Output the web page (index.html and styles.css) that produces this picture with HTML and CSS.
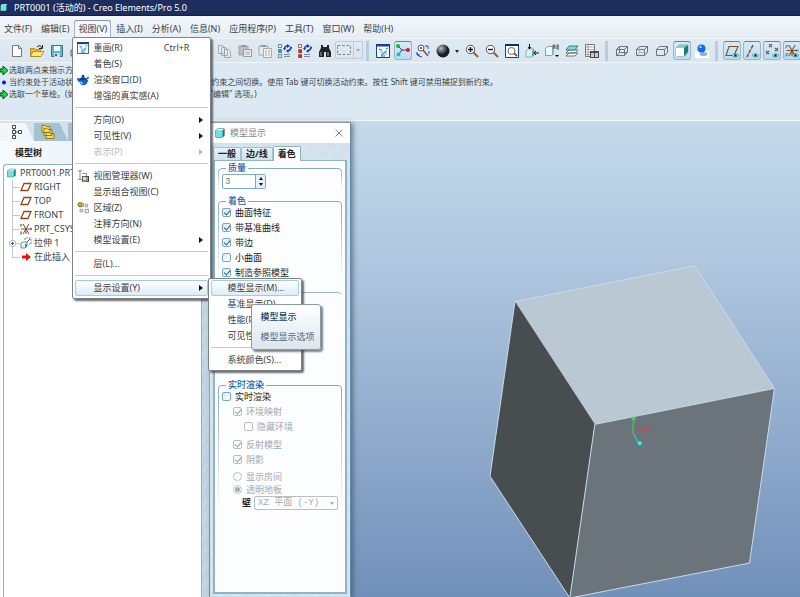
FILE: index.html
```html
<!DOCTYPE html>
<html lang="zh-CN">
<head>
    <meta charset="UTF-8">
    <meta name="viewport" content="width=device-width, initial-scale=1.0">
    <title>PRT0001 (活动的) - Creo Elements/Pro 5.0</title>
    <link rel="stylesheet" href="styles.css">
</head>
<body>
    <!-- Shared icons -->
    <svg class="defs" aria-hidden="true">
        <symbol id="part" viewBox="0 0 12 12">
            <path d="M1 3l2-2h8v8l-2 2H1z" fill="#1b8a8a" stroke="#234" stroke-width=".8"/>
            <path d="M1 3h8v8H1z" fill="#6fe3e0"/>
            <path d="M1 3l2-2h8L9 3z" fill="#d8ffff"/>
        </symbol>
        <symbol id="plane" viewBox="0 0 12 12">
            <path d="M4 2.500h7L8 9.500H1z" fill="none" stroke="#8a4a22" stroke-width="1.300"/>
        </symbol>
        <symbol id="csys" viewBox="0 0 12 12">
            <path d="M1 6h10M3 1l6 10M9 1L3 11M6 6v5" fill="none" stroke="#8a4a22" stroke-width="1"/>
            <path d="M0 1l2 2M2 1L0 4M10 5l2 2M12 5l-2 2M0 9h2l-2 2h2" fill="none" stroke="#555" stroke-width=".7"/>
        </symbol>
        <symbol id="eye" viewBox="0 0 8 5">
            <path d="M0 2.500Q4-1.500 8 2.500Q4 6 0 2.500z" fill="#d5e2e4" stroke="#566" stroke-width=".7"/>
            <circle cx="4" cy="2.400" r="1.700" fill="#087f80"/>
            <circle cx="4" cy="2.400" r=".7" fill="#012"/>
        </symbol>
        <symbol id="repaint" viewBox="0 0 14 14">
            <path d="M.5.500h13v13H.5z" fill="#fff" stroke="#17408c"/>
            <path d="M0 0h14v2.500H0z" fill="#1d3f90"/>
            <path d="M3 5l5 3 3-4v7H5z" fill="#a8dcf5"/>
            <path d="M3 5l3 1M10 5l2-1M10 7l-5 5M5 12h4" fill="none" stroke="#2676ba"/>
        </symbol>
        <symbol id="wire" viewBox="0 0 14 14">
            <path d="M1.500 5.500h8v6h-8zM4.500 2.500h8v6h-8zM1.500 5.500l3-3M9.500 5.500l3-3M9.500 11.500l3-3M1.500 11.500l3-3" fill="none" stroke="#666" stroke-width=".9"/>
        </symbol>
    </svg>

    <header class="title-bar">
        <svg class="title-icon"><use href="#part"/></svg>
        <h1>PRT0001 (活动的) - Creo Elements/Pro 5.0</h1>
    </header>

    <nav class="menu-bar">
        <button class="menu-button">文件(F)</button>
        <button class="menu-button">编辑(E)</button>
        <div class="menu-holder">
            <button class="menu-button open" aria-expanded="true">视图(V)</button>
            <!-- View menu -->
            <ul class="menu view-menu">
                <li><button class="menu-item"><svg class="menu-icon"><use href="#repaint"/></svg>重画(R)<span class="shortcut">Ctrl+R</span></button></li>
                <li><button class="menu-item">着色(S)</button></li>
                <li><button class="menu-item"><svg class="menu-icon" viewBox="0 0 14 14"><path d="M2 6h10q2 0 2-2l-1-1-2 2H3L0 5q0 4 3 4 1 4 5 4t5-6z" fill="#1463c8"/><path d="M2 6q5-5 10 0-1 6-5 7-4-1-5-7z" fill="#1463c8"/><circle cx="7" cy="2.500" r="1.500" fill="#0c3f9c"/><path d="M3 6q4-3 8 0-4 2-8 0z" fill="#0b3b92"/><path d="M4 9q1 2 3 2" fill="none" stroke="#a8e4ff" stroke-width="1.500"/></svg>渲染窗口(D)</button></li>
                <li><button class="menu-item">增强的真实感(A)</button></li>
                <li class="menu-line"></li>
                <li><button class="menu-item more">方向(O)</button></li>
                <li><button class="menu-item more">可见性(V)</button></li>
                <li><button class="menu-item more" disabled>表示(P)</button></li>
                <li class="menu-line"></li>
                <li><button class="menu-item"><svg class="menu-icon" viewBox="0 0 14 14"><path d="M1 1h5M3.500 1v10M1 11h5M6 4h5v4" fill="none" stroke="#777"/><path d="M6 7h8v7H6z" fill="#444"/><path d="M7 8h4v4H7z" fill="#ddd"/><path d="M12 8v5M7 13h4" stroke="#fff" stroke-width=".7"/></svg>视图管理器(W)</button></li>
                <li><button class="menu-item">显示组合视图(C)</button></li>
                <li><button class="menu-item"><svg class="menu-icon" viewBox="0 0 14 14"><path d="M2.500 1.500h5v4h-5zM9.500 2.500h3v3h-3zM3.500 8.500h3v3h-3zM9.500 8.500h4v4h-4z" fill="#eee" stroke="#777" stroke-width=".8"/><circle cx="3.500" cy="3" r="2.500" fill="#c9b51c" stroke="#554a00" stroke-width=".7"/></svg>区域(Z)</button></li>
                <li><button class="menu-item">注释方向(N)</button></li>
                <li><button class="menu-item more">模型设置(E)</button></li>
                <li class="menu-line"></li>
                <li><button class="menu-item">层(L)...</button></li>
                <li class="menu-line"></li>
                <li class="menu-holder">
                    <button class="menu-item more selected" aria-expanded="true">显示设置(Y)</button>
                    <ul class="menu display-menu">
                        <li class="menu-holder">
                            <button class="menu-item selected" aria-describedby="tip">模型显示(M)...</button>
                            <div class="tooltip" id="tip" role="tooltip">
                                <strong>模型显示</strong>
                                <span>模型显示选项</span>
                            </div>
                        </li>
                        <li><button class="menu-item">基准显示(D)...</button></li>
                        <li><button class="menu-item">性能(P)...</button></li>
                        <li><button class="menu-item">可见性(V)...</button></li>
                        <li class="menu-line"></li>
                        <li><button class="menu-item">系统颜色(S)...</button></li>
                    </ul>
                </li>
            </ul>
        </div>
        <button class="menu-button">插入(I)</button>
        <button class="menu-button">分析(A)</button>
        <button class="menu-button">信息(N)</button>
        <button class="menu-button">应用程序(P)</button>
        <button class="menu-button">工具(T)</button>
        <button class="menu-button">窗口(W)</button>
        <button class="menu-button">帮助(H)</button>
    </nav>

    <div class="toolbar">
        <div class="tool-group file-tools">
            <button class="tool" aria-label="新建"><svg viewBox="0 0 14 14"><path d="M2.500 1.500h6l3 3v8h-9z" fill="#fff" stroke="#777"/><path d="M8.500 1.500v3h3" fill="none" stroke="#777"/></svg></button>
            <button class="tool" aria-label="打开"><svg viewBox="0 0 14 14"><path d="M.5 4.500h4l1 1h5v7H.5z" fill="#e8b833" stroke="#9a7410" stroke-width=".7"/><path d="M3 7.500h11l-3 5H.5z" fill="#ffe87a" stroke="#9a7410" stroke-width=".7"/><path d="M7 3q3-3 5 1M12.500 1v3.500H9" fill="none" stroke="#222"/></svg></button>
            <button class="tool" aria-label="保存"><svg viewBox="0 0 14 14"><path d="M1.500 1.500h11v11h-11z" fill="#58bcc4" stroke="#3d7880"/><path d="M4 2h6v5H4z" fill="#f5f8f8"/><path d="M4 9h6v4H4z" fill="#dce"/><path d="M5 10h2v2H5z" fill="#367"/></svg></button>
            <button class="tool" aria-label="打印"><svg viewBox="0 0 14 14"><path d="M1 6h12v6H1z" fill="#ccc" stroke="#666"/><path d="M4 1h6v5H4z" fill="#fff" stroke="#666"/></svg></button>
        </div>
        <div class="tool-group">
            <button class="tool" aria-label="复制" disabled><svg viewBox="0 0 14 14"><path d="M.5 1.500h4l2 2v6h-6zM3.500 3.500h4l2 2v6h-6zM6.500 5.500h4l2 2v6h-6z" fill="#e5eaed" stroke="#999" stroke-width=".8"/></svg></button>
            <button class="tool" aria-label="粘贴" disabled><svg viewBox="0 0 14 14"><path d="M1 2h9v9H1z" fill="#b9c0c4" stroke="#999" stroke-width=".8"/><path d="M3 1h5v2H3z" fill="#999"/><path d="M5.500 5.500h8v7h-8z" fill="#eee" stroke="#999"/><path d="M7 8h5M7 10h5" stroke="#aaa"/></svg></button>
            <button class="tool" aria-label="选择性粘贴" disabled><svg viewBox="0 0 14 14"><path d="M1 2h9v9H1z" fill="#e5eaed" stroke="#999" stroke-width=".8"/><path d="M3 1h5v2H3z" fill="#999"/><path d="M5.500 4.500h8v9h-8z" fill="#f4f4f4" stroke="#aaa"/><path d="M7 7h2M10 7h2M7 9h2M10 9h2M7 11h2M10 11h2" stroke="#aaa"/></svg></button>
            <button class="tool" aria-label="再生"><svg viewBox="0 0 14 14"><path d="M.5.500h3v3h-3zM.5 5.500h3v3h-3zM.5 10.500h3v3h-3z" fill="#eff" stroke="#467" stroke-width=".8"/><path d="M1 6h3v3H1z" fill="#2a9"/><path d="M6 10.500h6M6 12.500h6" stroke="#889"/><path d="M6.500 5q0-3 3-3M13 3q0 3-3 4" fill="none" stroke="#123caa" stroke-width="1.300"/><path d="M9 0l3 2-3 2zM10.500 5v4L8 7zM5 4h3L6.500 6.500zM11.500 4.500h3L13 2z" fill="#123caa"/></svg></button>
            <button class="tool" aria-label="再生管理器"><svg viewBox="0 0 14 14"><path d="M.5.500h3v3h-3zM.5 5.500h3v3h-3zM.5 10.500h3v3h-3z" fill="#fee" stroke="#943" stroke-width=".8"/><path d="M1 6h3v3H1zM1 11h3v3H1z" fill="#d21"/><path d="M6 10.500h6M6 12.500h6" stroke="#889"/><path d="M6.500 5q0-3 3-3M13 3q0 3-3 4" fill="none" stroke="#123caa" stroke-width="1.300"/><path d="M9 0l3 2-3 2zM10.500 5v4L8 7zM5 4h3L6.500 6.500zM11.500 4.500h3L13 2z" fill="#123caa"/></svg></button>
            <button class="tool" aria-label="查找"><svg viewBox="0 0 14 14"><path d="M3 1h2v2h4V1h2v3l2 4v5H8V8H6v5H1V8l2-4z" fill="#222"/><path d="M3 8v4M10 8v4" stroke="#aaa"/></svg></button>
            <button class="select-tool" aria-label="选取框" disabled><svg viewBox="0 0 26 16"><path d="M17.500 0v16" stroke="#c2cdd3"/><path d="M1.500 3.500h13v9h-13z" fill="none" stroke="#888" stroke-dasharray="3 1.500"/><path d="M20 7h4l-2 3z" fill="#aab"/></svg></button>
        </div>
        <span class="tool-line"></span>
        <div class="tool-group">
            <button class="tool" aria-label="重画"><svg><use href="#repaint"/></svg></button>
            <button class="tool on" aria-label="旋转中心"><svg viewBox="0 0 14 14"><path d="M2 3l4 4h6M6 7l-4 5" fill="none" stroke="#444"/><circle cx="2" cy="3" r="2" fill="#15b81d"/><circle cx="12" cy="7" r="2" fill="#d51a1a"/><circle cx="2.500" cy="11.500" r="2" fill="#22b7bd"/></svg></button>
            <button class="tool" aria-label="定向模式"><svg viewBox="0 0 14 14"><circle cx="5" cy="4" r="3" fill="#fff" stroke="#555"/><circle cx="5" cy="4" r="1" fill="#333"/><path d="M7 6l5 6" stroke="#85502c" stroke-width="1.500"/><path d="M9 2h3v3M1 9q1 4 5 4M1 8v3h3M13 7v3" fill="none" stroke="#2449ae"/></svg></button>
            <button class="tool" aria-label="外观库"><svg viewBox="0 0 14 14"><defs><radialGradient id="ball" cx=".35" cy=".3"><stop stop-color="#bbb"/><stop offset="1" stop-color="#191c20"/></radialGradient></defs><circle cx="7" cy="7" r="6.500" fill="url(#ball)"/></svg></button>
            <button class="tool-arrow" aria-label="外观库列表"></button>
            <button class="tool" aria-label="放大"><svg viewBox="0 0 14 14"><path d="M8 8l5 5" stroke="#905d42" stroke-width="2"/><circle cx="5.500" cy="5.500" r="4.200" fill="#f4fbfd" stroke="#555"/><path d="M3 5.500h5M5.500 3v5" stroke="#111" stroke-width="1.300"/></svg></button>
            <button class="tool" aria-label="缩小"><svg viewBox="0 0 14 14"><path d="M8 8l5 5" stroke="#905d42" stroke-width="2"/><circle cx="5.500" cy="5.500" r="4.200" fill="#f4fbfd" stroke="#555"/><path d="M3 5.500h5" stroke="#111" stroke-width="1.300"/></svg></button>
            <button class="tool" aria-label="重新调整"><svg viewBox="0 0 14 14"><path d="M.5.500h13v13H.5z" fill="#fff" stroke="#17408c"/><path d="M0 0h14v2H0z" fill="#102b78"/><path d="M8 8l4 4" stroke="#85502c" stroke-width="1.800"/><circle cx="6.500" cy="7" r="3.500" fill="#fff" stroke="#666"/></svg></button>
            <button class="tool" aria-label="重定向"><svg viewBox="0 0 14 14"><path d="M1 7l2-2h6v6l-2 2H1z" fill="#d7f5f3" stroke="#6c9694" stroke-width=".7"/><path d="M7 7l2-2v6l-2 2z" fill="#50aaa8"/><path d="M4.500 0v5M3 3l1.500 2L6 3M14 9H9M11 7L9 9l2 2" fill="none" stroke="#111"/></svg></button>
            <button class="tool" aria-label="已命名视图"><svg viewBox="0 0 14 14"><path d="M.5 4.500l2-2h6v7l-2 2h-6z" fill="#edf9f7" stroke="#788" stroke-width=".8"/><path d="M7 4h2v6l-2 2z" fill="#75bebe"/><path d="M8 5V1h2v4M8 3h2M12 1h2v4h-2zM12 3h2" fill="none" stroke="#444" stroke-width=".8"/><path d="M10 11h4l-2 2z"/></svg></button>
            <button class="tool" aria-label="层"><svg viewBox="0 0 14 14"><path d="M1 12l3-3h9l-3 3zM1 9l3-3h9l-3 3z" fill="#fff" stroke="#555" stroke-width=".8"/><path d="M1 6l3-4h9l-3 4z" fill="#78dce0" stroke="#267" stroke-width=".8"/></svg></button>
            <button class="tool" aria-label="视图管理器"><svg viewBox="0 0 14 14"><path d="M.5.500h9v12h-9z" fill="#fff" stroke="#777"/><path d="M1 3h8M1 5.500h8M1 8h8M1 10.500h8M3 1v11" stroke="#888" stroke-width=".7"/><path d="M5 7h9v7H5z" fill="#484848"/><path d="M6 9h3v4H6zM10 9h3v4h-3z" fill="#ccc"/></svg></button>
        </div>
        <span class="tool-line"></span>
        <div class="tool-group">
            <button class="tool" aria-label="线框"><svg><use href="#wire"/></svg></button>
            <button class="tool" aria-label="隐藏线"><svg viewBox="0 0 14 14"><path d="M1.500 5.500h8v6h-8zM1.500 5.500l3-3h8v6l-3 3M9.500 5.500l3-3" fill="none" stroke="#666" stroke-width=".9"/><path d="M4.500 3v5.500h8M4.500 8.500l-3 3" fill="none" stroke="#aaa" stroke-width=".8"/></svg></button>
            <button class="tool" aria-label="消隐"><svg viewBox="0 0 14 14"><path d="M1.500 5.500h8v6h-8zM1.500 5.500l3-3h8v6l-3 3M9.500 5.500l3-3" fill="none" stroke="#666" stroke-width=".9"/></svg></button>
            <button class="tool on" aria-label="着色"><svg viewBox="0 0 14 14"><path d="M1 5l3-3h9v7l-3 4H1z" fill="#71d9d9" stroke="#899" stroke-width=".7"/><path d="M1 5h8v8H1z" fill="#fff"/><path d="M9 5l4-3v7l-4 4z" fill="#187d7b"/></svg></button>
            <button class="tool" aria-label="增强的真实感"><svg viewBox="0 0 14 14"><path d="M0 7h14v7H0z" fill="#fff"/><ellipse cx="8.500" cy="10" rx="4" ry="2" fill="#8fb4d3"/><circle cx="6.500" cy="4.500" r="4" fill="#096fe5"/><circle cx="5.500" cy="3" r="1.200" fill="#a0d5ff"/></svg></button>
        </div>
        <span class="tool-line"></span>
        <div class="tool-group">
            <button class="tool on" aria-label="平面显示"><svg viewBox="0 0 14 14"><path d="M4 2.500h9L9 11.500H1z" fill="none" stroke="#8a4a22" stroke-width="1.100"/><use href="#eye" x="7" y="9" width="7" height="5"/></svg></button>
            <button class="tool on" aria-label="轴显示"><svg viewBox="0 0 14 14"><path d="M8 1L2 13" stroke="#8a4a22" stroke-width="1.500" stroke-dasharray="4 1"/><use href="#eye" x="7" y="9" width="7" height="5"/></svg></button>
            <button class="tool on" aria-label="点显示"><svg viewBox="0 0 14 14"><path d="M4 0l3 3M7 0L4 3M1 7l3 3M4 7l-3 3M10 4l3 3M13 4l-3 3" stroke="#8a4a22" stroke-width="1.100"/><use href="#eye" x="7" y="9" width="7" height="5"/></svg></button>
            <button class="tool on" aria-label="坐标系显示"><svg viewBox="0 0 14 14"><use href="#csys" width="14" height="13"/><use href="#eye" x="7" y="9" width="7" height="5"/></svg></button>
        </div>
    </div>

    <section class="messages">
        <p><svg class="message-icon"><path d="M0 3h3V0l5 4.500L3 9V6H0z" fill="#20d64a" stroke="#084b18"/></svg>选取两点来指示方向。</p>
        <p><svg class="message-icon"><circle cx="4" cy="4.500" r="2" fill="#1212ee"/></svg>当约束处于活动状态时, 可通过单击右键在锁定/禁用/启用约束之间切换。使用 Tab 键可切换活动约束。按住 Shift 键可禁用捕捉到新约束。</p>
        <p><svg class="message-icon"><path d="M0 3h3V0l5 4.500L3 9V6H0z" fill="#20d64a" stroke="#084b18"/></svg>选取一个草绘。(如果首选内部草绘, 可在放置面板中找到 "编辑" 选项。)</p>
    </section>

    <main class="workspace">
        <aside class="navigator">
            <div class="nav-tabs">
                <button class="nav-tab active" aria-label="模型树"><svg viewBox="0 0 14 14"><path d="M2.500.500h3v3h-3zM2.500 5.500h3v3h-3zM2.500 10.500h3v3h-3zM8.500 5.500h3v3h-3zM4 4v1M4 9v1M6 7h2" fill="#fff" stroke="#444"/></svg></button>
                <button class="nav-tab" aria-label="文件夹浏览器"><svg viewBox="0 0 14 14"><path d="M1 2V.5h3l1 1h4v6H1zM3 5V3.500h3l1 1h4v6H3zM5 7.500h3l1 1h4v5H5z" fill="#f5dd58" stroke="#846a10" stroke-width=".8"/></svg></button>
                <button class="nav-tab" aria-label="收藏夹"><svg viewBox="0 0 14 14"><path d="M2 3h10v9H2z" fill="#eee" stroke="#666"/></svg></button>
            </div>
            <h2>模型树</h2>
            <ul class="tree">
                <li class="root"><svg class="tree-icon"><use href="#part"/></svg>PRT0001.PRT</li>
                <li><svg class="tree-icon"><use href="#plane"/></svg>RIGHT</li>
                <li><svg class="tree-icon"><use href="#plane"/></svg>TOP</li>
                <li><svg class="tree-icon"><use href="#plane"/></svg>FRONT</li>
                <li><svg class="tree-icon"><use href="#csys"/></svg>PRT_CSYS_DEF</li>
                <li><button class="expander" aria-label="展开"></button><svg class="tree-icon" viewBox="0 0 12 12"><path d="M1 6l2-1h4v4l-2 2H1z" fill="#e8f5f5" stroke="#577" stroke-width=".8"/><path d="M5 7h2v3l-2 1z" fill="#2b9c9c"/><path d="M5 3V1h6v6H9" fill="none" stroke="#788" stroke-dasharray="2 1"/><path d="M7 5l3-3" stroke="#267"/></svg>拉伸 1</li>
                <li><svg class="tree-icon" viewBox="0 0 12 12"><path d="M2 4.500h4V2l5 4-5 4V7.500H2z" fill="#e21212"/></svg>在此插入</li>
            </ul>
        </aside>
        <div class="splitter"></div>
        <div class="viewport">
            <!-- Shaded cube with its spin centre -->
            <svg class="model" viewBox="209 120 591 477">
                <path d="M515 301L695 265 775 388 595 424z" fill="#bac8d3"/>
                <path d="M515 301L595 424 570 598 490 476z" fill="#484d50"/>
                <path d="M595 424L775 388 750 563 570 598z" fill="#6b747b"/>
                <path d="M570 598L595 424 775 388M570 598L490 476 515 301 695 265 775 388 750 563 570 598" fill="none" stroke="#c7dcea" stroke-width="1"/>
                <path d="M633 432l1-14" stroke="#2bea35"/>
                <path d="M633 432l16-3" stroke="#e43b3b"/>
                <path d="M633 432l6 11" stroke="#45cfe0"/>
                <circle cx="634" cy="418" r="2" fill="#2bea35"/>
                <circle cx="649" cy="429" r="1.500" fill="#f33"/>
                <circle cx="640" cy="443" r="2" fill="#26f6ff"/>
            </svg>

            <section class="dialog" role="dialog" aria-labelledby="dialogTitle">
                <header class="dialog-title">
                    <svg class="dialog-icon"><use href="#part"/></svg>
                    <h2 id="dialogTitle">模型显示</h2>
                    <button class="close" aria-label="关闭"><svg viewBox="0 0 8 8"><path d="M.5.500l7 7M7.500.500l-7 7" stroke="#888"/></svg></button>
                </header>
                <div class="tabs" role="tablist">
                    <button class="tab" role="tab">一般</button>
                    <button class="tab" role="tab">边/线</button>
                    <button class="tab active" role="tab" aria-selected="true">着色</button>
                </div>
                <div class="panel">
                    <fieldset>
                        <legend>质量</legend>
                        <div class="spinner">
                            <input type="text" value="3" aria-label="质量">
                            <span class="spin-buttons">
                                <button class="spin-up" aria-label="增加"></button>
                                <button class="spin-down" aria-label="减少"></button>
                            </span>
                        </div>
                    </fieldset>
                    <fieldset>
                        <legend>着色</legend>
                        <label class="option"><input type="checkbox" checked>曲面特征</label>
                        <label class="option"><input type="checkbox" checked>带基准曲线</label>
                        <label class="option"><input type="checkbox" checked>带边</label>
                        <label class="option"><input type="checkbox">小曲面</label>
                        <label class="option"><input type="checkbox" checked>制造参照模型</label>
                    </fieldset>
                    <fieldset class="transparency">
                        <legend>透明</legend>
                    </fieldset>
                    <fieldset>
                        <legend>实时渲染</legend>
                        <label class="option"><input type="checkbox">实时渲染</label>
                        <div class="option-group indent">
                            <label class="option"><input type="checkbox" checked disabled>环境映射</label>
                            <label class="option indent"><input type="checkbox" disabled>隐藏环境</label>
                        </div>
                        <div class="option-group indent">
                            <label class="option"><input type="checkbox" checked disabled>反射模型</label>
                            <label class="option"><input type="checkbox" checked disabled>阴影</label>
                        </div>
                        <div class="option-group indent">
                            <label class="option compact"><input type="radio" name="room" disabled>显示房间</label>
                            <label class="option compact"><input type="radio" name="room" checked disabled>透明地板</label>
                            <div class="wall">
                                <label for="wall">壁</label>
                                <span class="select-box">
                                    <select id="wall" disabled>
                                        <option>XZ 平面 (-Y)</option>
                                    </select>
                                </span>
                            </div>
                        </div>
                    </fieldset>
                </div>
            </section>
        </div>
    </main>
</body>
</html>
```

FILE: styles.css
```css
:root {
    --navy: #1d2e5e;
    --bar: #dce9f2;
    --line: #8fb0c4;
    --text: #3b3f45;
    --blue: #2960a0;
    --muted: #a5a9ab;
}

* {
    box-sizing: border-box;
}

body {
    margin: 0;
    height: 100vh;
    display: flex;
    flex-direction: column;
    overflow: hidden;
    background: var(--bar);
    color: var(--text);
    font-family: "Noto Sans", "Noto Sans CJK SC", sans-serif;
    font-size: 9px;
    line-height: 14px;
}

button,
input,
select {
    font: inherit;
    color: inherit;
    margin: 0;
    padding: 0;
    border: 0;
    background: none;
}

h1,
h2,
p,
ul {
    margin: 0;
    padding: 0;
    list-style: none;
}

svg {
    display: block;
    flex: none;
}

.defs {
    position: absolute;
    width: 0;
    height: 0;
}

/* Title bar */
.title-bar {
    display: flex;
    align-items: center;
    gap: 6px;
    height: 16px;
    background: var(--navy);
    border-bottom: 1px solid #14204a;
    color: #fff;
}

.title-bar h1 {
    font-size: 9px;
    font-weight: normal;
}

.title-icon {
    width: 8px;
    height: 9px;
}

/* Menu bar */
.menu-bar {
    display: flex;
    gap: 1px;
    height: 23px;
    padding-top: 4px;
    background: linear-gradient(#f3f8fc, #e5edf3);
    border-bottom: 1px solid #eff5f9;
}

.menu-button {
    height: 18px;
    padding: 0 4px;
    white-space: nowrap;
}

.menu-button.open {
    background: #f4f8fa;
    border-radius: 3px 3px 0 0;
    box-shadow: inset 0 1px #8a959d, inset 1px 0 #a8b4bb, inset -1px 0 #a8b4bb;
}

.menu-holder {
    position: relative;
}

.menu {
    position: absolute;
    z-index: 10;
    padding: 2px;
    background: #fff;
    border: 1px solid #7c8488;
    border-radius: 2px;
    box-shadow: 2px 2px 2px rgba(40, 50, 60, 0.7);
}

.view-menu {
    top: 17px;
    left: -2px;
    width: 139px;
}

.display-menu {
    top: -2px;
    left: 133px;
    width: 94px;
    padding-top: 1px;
}

.menu-item {
    position: relative;
    display: flex;
    align-items: center;
    width: 100%;
    height: 16px;
    padding: 0 18px 0 17px;
    border: 1px solid transparent;
    border-radius: 2px;
    text-align: left;
    white-space: nowrap;
}

.menu-item:disabled {
    color: #b8bbbd;
}

.menu-item.selected {
    background: linear-gradient(#fff, #d9edf8);
    border-color: #a4cbdc;
}

.display-menu .menu-item {
    padding: 0 0 0 15px;
}

.menu-item.more::after {
    content: "";
    position: absolute;
    right: 4px;
    border: 3px solid transparent;
    border-left: 4px solid #111;
    border-right: 0;
}

.menu-item.more:disabled::after {
    border-left-color: #b8bbbd;
}

.menu-icon {
    position: absolute;
    left: 1px;
    width: 12px;
    height: 12px;
}

.shortcut {
    margin-left: auto;
}

.menu-line {
    height: 8px;
    border-bottom: 4px solid #fff;
    background: linear-gradient(#fff 3px, #c5c9cb 3px);
}

.tooltip {
    position: absolute;
    z-index: 20;
    top: 24px;
    left: 40px;
    display: flex;
    flex-direction: column;
    gap: 6px;
    width: 70px;
    padding: 5px 8px;
    background: linear-gradient(#fff, #dce6ee);
    border: 1px solid #879aa5;
    border-radius: 3px;
    box-shadow: 2px 2px 2px rgba(40, 50, 60, 0.6);
    white-space: nowrap;
    color: #53687c;
}

.tooltip strong {
    font-weight: 500;
    color: #23445e;
}

/* Toolbar */
.toolbar {
    display: flex;
    align-items: center;
    height: 24px;
    padding-left: 7px;
    border-bottom: 1px solid #eff6fa;
    background: linear-gradient(#dfebf3, #d9e6ef);
}

.tool-group {
    display: flex;
    flex: none;
}

.file-tools {
    width: 208px;
}

.tool {
    display: flex;
    align-items: center;
    justify-content: center;
    width: 20px;
    height: 20px;
}

.tool svg {
    width: 14px;
    height: 14px;
}

.tool.on {
    width: 18px;
    height: 19px;
    margin: 0 1px;
    border: 1px solid #9fb5c3;
    border-top-color: #747f87;
    border-radius: 3px;
    background: linear-gradient(#d8ebf7, #b7dcf5);
}

.select-tool {
    width: 28px;
    height: 18px;
    border: 1px solid #c2cdd3;
    border-radius: 2px;
}

.select-tool svg {
    width: 26px;
    height: 16px;
}

.tool-line {
    flex: none;
    width: 3px;
    height: 20px;
    margin: 0 4px 0 3px;
    background: #b7cddb;
}

.tool-arrow {
    position: relative;
    width: 9px;
}

.tool-arrow::after {
    content: "";
    position: absolute;
    top: 9px;
    left: 2px;
    border: 2px solid transparent;
    border-top: 3px solid #222;
    border-bottom: 0;
}

/* Message area */
.messages {
    height: 58px;
    padding-top: 1px;
    border-bottom: 1px solid #f5fafc;
    font-size: 8px;
    line-height: 12px;
}

.messages p {
    display: flex;
    align-items: center;
    gap: 1px;
    height: 12px;
    white-space: nowrap;
}

.message-icon {
    width: 8px;
    height: 9px;
}

/* Workspace */
.workspace {
    display: flex;
    flex: 1;
    min-height: 0;
}

.navigator {
    display: flex;
    flex-direction: column;
    width: 201px;
    background: #fff;
}

.nav-tabs {
    display: flex;
    height: 20px;
    padding-top: 2px;
    background: #d3e2ec;
}

.nav-tab {
    width: 34px;
    background: #a5c2d5;
    clip-path: polygon(0 0, 75% 0, 100% 100%, 0 100%);
    padding-left: 7px;
}

.nav-tab.active {
    background: #f0f6fa;
    padding-left: 10px;
}

.nav-tab svg {
    width: 14px;
    height: 14px;
}

.navigator h2 {
    height: 23px;
    padding-left: 15px;
    background: linear-gradient(90deg, #f8fbfd, #dce8f0);
    font-size: 9px;
    line-height: 24px;
    font-weight: bold;
    color: #222;
}

.tree {
    flex: 1;
    margin-left: 3px;
    padding-top: 1px;
    border: 1px solid var(--line);
    border-width: 1px 0 0 1px;
    border-radius: 3px 0 0 0;
}

.tree li {
    position: relative;
    display: flex;
    align-items: center;
    gap: 2px;
    height: 14px;
    padding-left: 16px;
    white-space: nowrap;
}

.tree .root {
    gap: 4px;
    padding-left: 3px;
}

.tree li:not(.root)::before {
    content: "";
    position: absolute;
    top: 0;
    left: 8px;
    width: 7px;
    height: 7px;
    border: 1px solid #c4c9cc;
    border-width: 0 0 1px 1px;
}

.tree li:not(.root):not(:last-child)::after {
    content: "";
    position: absolute;
    left: 8px;
    height: 14px;
    border-left: 1px solid #c4c9cc;
}

.tree-icon {
    width: 12px;
    height: 12px;
}

.root .tree-icon {
    width: 9px;
    height: 10px;
}

.expander {
    position: absolute;
    z-index: 1;
    left: 5px;
    width: 7px;
    height: 7px;
    border: 1px solid #a6c1cf;
    border-radius: 3px;
    background: linear-gradient(#456, #456) center / 3px 1px no-repeat, linear-gradient(#456, #456) center / 1px 3px no-repeat, #eef6fa;
}

.splitter {
    width: 8px;
    border-left: 1px solid #8db0c4;
    background: repeating-linear-gradient(135deg, #c8dbe6 0 1px, #bccfda 1px 2px);
}

.viewport {
    position: relative;
    flex: 1;
    min-width: 0;
    background: linear-gradient(#c4daea, #afc6df 30%, #7190ba);
}

.model {
    width: 100%;
    height: 100%;
}

/* Model display dialog */
.dialog {
    position: absolute;
    top: 1px;
    bottom: 0;
    left: 1px;
    display: flex;
    flex-direction: column;
    width: 141px;
    padding: 0 3px 3px;
    background: repeating-linear-gradient(135deg, #d7e6ef 0 1px, #cfdfe9 1px 2px);
    border-top: 1px solid #8d9da8;
    border-right: 1px solid #688ca5;
    box-shadow: 2px 1px 5px rgba(45, 65, 85, 0.6);
}

.dialog-title {
    display: flex;
    align-items: center;
    gap: 5px;
    height: 20px;
    margin: 0 -3px;
    padding: 0 7px 0 5px;
    background: #fff;
}

.dialog-title h2 {
    font-size: 9px;
    font-weight: normal;
    color: #888;
}

.dialog-icon {
    width: 10px;
    height: 10px;
}

.close {
    margin-left: auto;
}

.close svg {
    width: 8px;
    height: 8px;
}

.tabs {
    display: flex;
    align-items: flex-end;
    height: 17px;
}

.tab {
    height: 13px;
    padding: 0 4px;
    border: 1px solid #a3c0d1;
    border-bottom: 0;
    border-radius: 2px 2px 0 0;
    background: linear-gradient(#e8f1f6, #d1e1eb);
    line-height: 12px;
    font-weight: bold;
    white-space: nowrap;
    color: #222;
}

.tab.active {
    height: 15px;
    margin-bottom: -1px;
    border-color: var(--line);
    background: #fcfdff;
}

.panel {
    display: flex;
    flex-direction: column;
    flex: 1;
    gap: 8px;
    min-height: 0;
    padding: 3px 3px 2px;
    border: 2px solid #91b3c7;
    border-width: 1px 2px 2px;
    background: #fcfdff;
}

.tab.active {
    position: relative;
}

fieldset {
    position: relative;
    min-width: 0;
    margin: 0;
    padding: 0 4px;
    border: 0;
}

/* Frame that fades out towards the bottom */
fieldset::before {
    content: "";
    position: absolute;
    inset: -4px 0 0;
    border: 1px solid #86a9c0;
    border-bottom: 0;
    border-radius: 4px 4px 0 0;
    mask-image: linear-gradient(#000, transparent);
    pointer-events: none;
}

legend {
    position: relative;
    z-index: 1;
    margin-left: 4px;
    padding: 0 2px;
    background: #fcfdff;
    line-height: 8px;
    color: var(--blue);
    font-weight: 500;
}

.transparency {
    height: 85px;
}

.spinner {
    display: flex;
    width: 44px;
    height: 15px;
    margin-top: 2px;
    border: 1px solid #82a8bf;
    border-radius: 2px;
    background: #fff;
}

.spinner input {
    width: 32px;
    padding-left: 2px;
    font-family: "Liberation Mono", monospace;
    color: #777;
}

.spin-buttons {
    display: flex;
    flex-direction: column;
    flex: 1;
    align-items: center;
    justify-content: center;
    gap: 3px;
    border-left: 1px solid #82a8bf;
    background: #e5f1f8;
}

.spin-up,
.spin-down {
    border: 2px solid transparent;
}

.spin-up {
    border-top: 0;
    border-bottom: 3px solid #111;
}

.spin-down {
    border-bottom: 0;
    border-top: 3px solid #111;
}

.option {
    display: flex;
    align-items: center;
    gap: 4px;
    height: 15px;
    color: #222;
    white-space: nowrap;
}

.option.compact {
    height: 13px;
}

.option:has(:disabled) {
    color: var(--muted);
}

.indent {
    margin-left: 11px;
}

.option-group + .option-group {
    margin-top: 3px;
}

.option input {
    appearance: none;
    position: relative;
    width: 9px;
    height: 9px;
    border: 1px solid #7aa6bf;
    border-radius: 2px;
    background: linear-gradient(135deg, #d5eaf6, #fff);
}

.option input:disabled {
    border-color: #b9bec1;
    background: #fff;
}

.option input[type="radio"] {
    border-radius: 50%;
}

.option input[type="checkbox"]:checked::after {
    content: "";
    position: absolute;
    top: 0;
    left: 2px;
    width: 3px;
    height: 5px;
    border: solid #1f5f91;
    border-width: 0 1px 1px 0;
    transform: rotate(40deg);
}

.option input:disabled:checked::after {
    border-color: #999;
}

.option input[type="radio"]:checked::after {
    content: "";
    position: absolute;
    inset: 1px;
    border-radius: 50%;
    background: #aaa;
}

.wall {
    display: flex;
    align-items: center;
    justify-content: flex-end;
    gap: 3px;
    height: 14px;
}

.wall label {
    font-weight: bold;
    color: #222;
}

.select-box {
    position: relative;
}

.select-box::after {
    content: "";
    position: absolute;
    top: 6px;
    right: 4px;
    border: 2px solid transparent;
    border-top: 3px solid #aaa;
    border-bottom: 0;
}

.wall select {
    display: block;
    appearance: none;
    width: 84px;
    height: 14px;
    padding-left: 3px;
    border: 1px solid #b8bfc3;
    border-radius: 2px;
    opacity: 1;
    color: #aaa;
    font-family: "Liberation Mono", "Noto Sans CJK SC", monospace;
    font-size: 9px;
    line-height: 12px;
}
```
